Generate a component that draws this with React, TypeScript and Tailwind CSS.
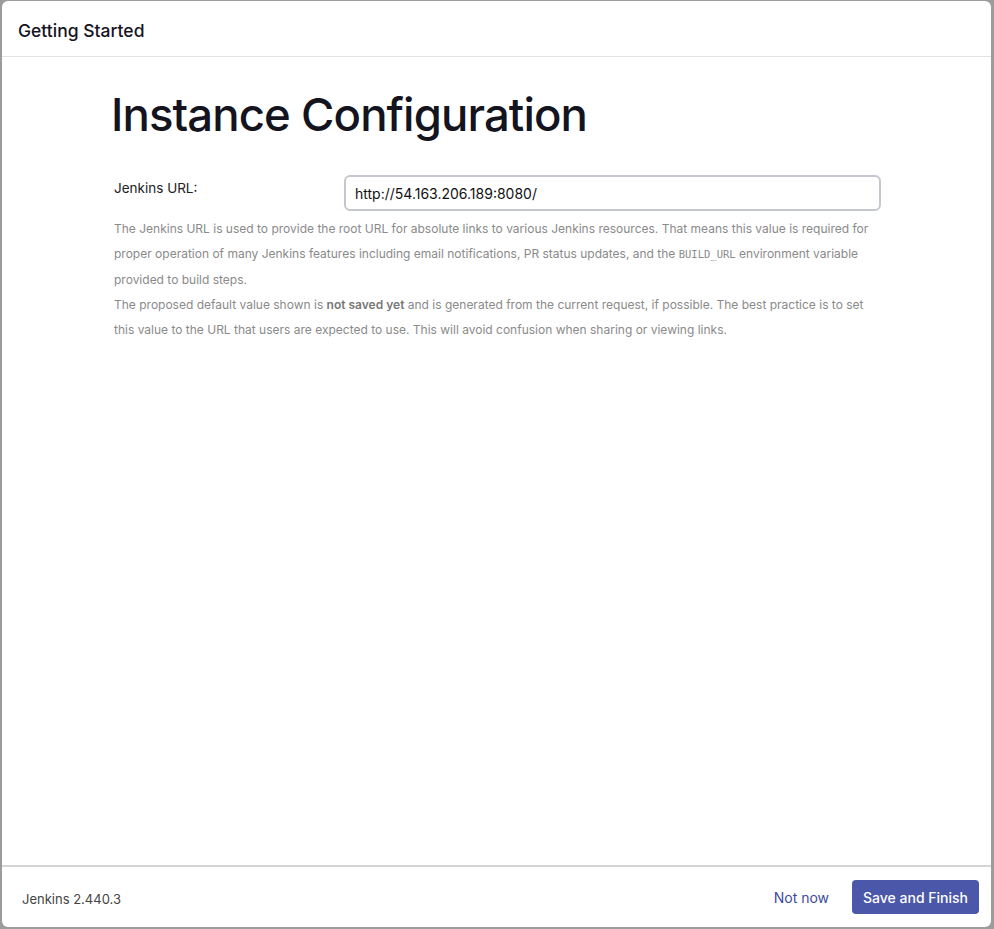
export default function App() {
  return (
    <div className="h-screen w-full bg-[#9c9c9c] pt-px pl-[2px] pr-[3px] pb-[2px] font-['Inter',sans-serif]">
      <div className="flex h-full flex-col overflow-hidden rounded-md bg-white">
        <header className="flex h-[56px] shrink-0 items-center border-b border-[#e2e2e4] px-4 pt-[5px]">
          <h1 className="text-[17.5px] font-medium text-[#14141f]">Getting Started</h1>
        </header>

        <main className="flex-1 pl-[109px] pr-[110px]">
          <h2 className="mt-[30px] text-[45.5px] font-medium leading-[56px] tracking-[-0.02em] text-[#14141f]">
            Instance Configuration
          </h2>

          <div className="mt-[32px] pl-[3px]">
            <div className="flex items-start">
              <label className="w-[230px] pt-[3px] text-[13.5px] text-[#222]">Jenkins URL:</label>
              <input
                type="text"
                defaultValue="http://54.163.206.189:8080/"
                className="h-[36px] w-[537px] rounded-md border-2 border-[#c4c7cf] px-[9px] text-[14px] text-[#111] outline-none"
              />
            </div>

            <div className="mt-[5px] text-[12px] leading-[25.25px] text-[#8a8a8a]">
              <p>
                The Jenkins URL is used to provide the root URL for absolute links to various Jenkins resources. That
                means this value is required for proper operation of many Jenkins features including email notifications,
                PR status updates, and the{' '}
                <code className="font-['DejaVu_Sans_Mono',monospace] text-[10.5px] leading-none">BUILD_URL</code>{' '}
                environment variable provided to build steps.
              </p>
              <p>
                The proposed default value shown is <strong className="font-semibold text-[#777]">not saved yet</strong>{' '}
                and is generated from the current request, if possible. The best practice is to set this value to the URL
                that users are expected to use. This will avoid confusion when sharing or viewing links.
              </p>
            </div>
          </div>
        </main>

        <footer className="flex h-[62px] shrink-0 items-center justify-between border-t-2 border-[#d4d4d6] pl-5 pr-[12px]">
          <span className="pt-[6px] text-[13px] text-[#444]">Jenkins 2.440.3</span>
          <div className="flex items-center gap-[23px]">
            <button className="text-[14px] text-[#3d4a9e]">Not now</button>
            <button className="h-[34px] rounded-[4px] bg-[#4b57a8] px-[11px] text-[14px] font-medium text-white">
              Save and Finish
            </button>
          </div>
        </footer>
      </div>
    </div>
  )
}
